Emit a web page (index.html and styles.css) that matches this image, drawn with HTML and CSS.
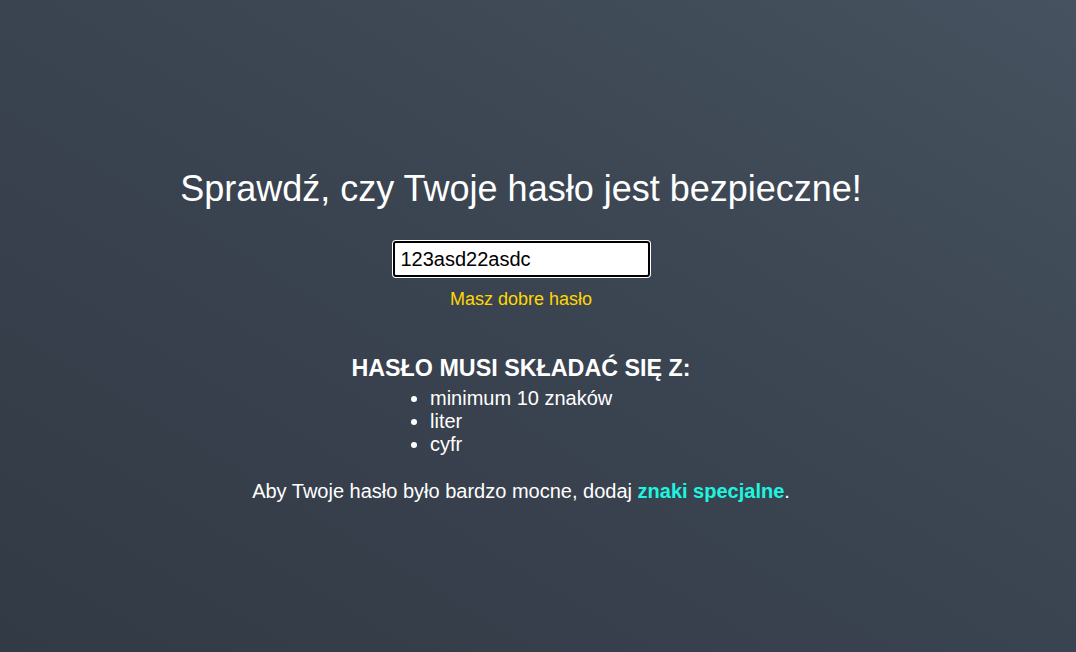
FILE: index.html
```html
<!DOCTYPE html>
<html lang="pl">
<head>
<meta charset="utf-8">
<title>Sprawdź hasło</title>
<link rel="stylesheet" href="styles.css">
</head>
<body>
<main class="page">
  <h1 class="title">Sprawdź, czy Twoje hasło jest bezpieczne!</h1>
  <div class="field">
    <input class="pass" type="text" value="123asd22asdc">
  </div>
  <p class="status">Masz dobre hasło</p>
  <section class="rules">
    <h2 class="rules-title">HASŁO MUSI SKŁADAĆ SIĘ Z:</h2>
    <ul class="rules-list">
      <li>minimum 10 znaków</li>
      <li>liter</li>
      <li>cyfr</li>
    </ul>
  </section>
  <p class="tip">Aby Twoje hasło było bardzo mocne, dodaj <strong class="accent">znaki specjalne</strong>.</p>
</main>
</body>
</html>
```

FILE: styles.css
```css
html, body {
  margin: 0;
  height: 100%;
}
body {
  background: linear-gradient(to top right, #323a45 0%, #3a4350 50%, #46525f 100%);
  color: #fff;
  font-family: "Liberation Sans", Arial, sans-serif;
}
.page {
  width: 1042px;
  text-align: center;
  padding-top: 167px;
}
.title {
  margin: 0;
  font-size: 36px;
  font-weight: normal;
  line-height: 44px;
}
.field {
  margin-top: 30px;
  display: flex;
  justify-content: center;
}
.pass {
  box-sizing: border-box;
  width: 257px;
  height: 36px;
  border: 2px solid #000;
  border-radius: 3px;
  box-shadow: 0 0 0 1px #fff;
  background: #fff;
  padding: 0 6px;
  font-family: "Liberation Sans", Arial, sans-serif;
  font-size: 20px;
  color: #000;
  outline: none;
}
.status {
  margin: 11px 0 0;
  color: #ffd700;
  font-size: 18px;
  line-height: 22px;
}
.rules {
  margin-top: 44px;
}
.rules-title {
  margin: 0;
  font-size: 23.3px;
  font-weight: bold;
  line-height: 28px;
}
.rules-list {
  display: inline-block;
  text-align: left;
  margin: 5px 0 0;
  padding-left: 40px;
  font-size: 20px;
  line-height: 23px;
  width: 222px;
}
.tip {
  margin: 23px 0 0;
  font-size: 20px;
  line-height: 24px;
}
.accent {
  color: #1ef5e0;
}
```
